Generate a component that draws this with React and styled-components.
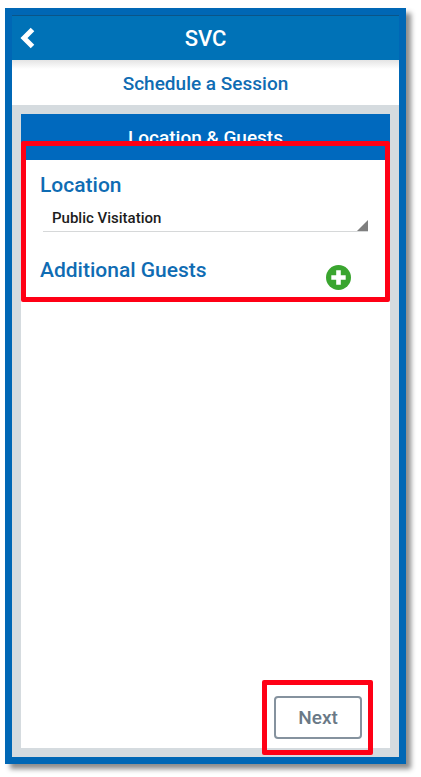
import React, { useState } from "react";
import styled, { createGlobalStyle } from "styled-components";

const GlobalStyle = createGlobalStyle`
  * {
    box-sizing: border-box;
  }
  body {
    margin: 0;
    background-color: #fff;
    font-family: Roboto, "Liberation Sans", sans-serif;
    font-weight: 500;
  }
`;

const Page = styled.div`
  display: flex;
  min-height: 100vh;
  padding: 8px 15px 13px 5px;
`;

const Frame = styled.div`
  flex: 1;
  min-width: 0;
  display: flex;
  flex-direction: column;
  border: 7px solid #0067b5;
  box-shadow: 5px 5px 5px rgba(0, 0, 0, 0.45);
`;

const TopBar = styled.header`
  display: grid;
  grid-template-columns: 32px 1fr 32px;
  align-items: center;
  height: 45px;
  border-top: 1px solid #0b5588;
  background-color: #0072b7;
  color: #fff;
`;

const BackButton = styled.button`
  display: flex;
  justify-content: center;
  padding: 0;
  border: none;
  background: none;
  color: inherit;
  cursor: pointer;
`;

const AppTitle = styled.h1`
  margin: 0;
  padding-top: 2px;
  font-size: 22px;
  font-weight: 500;
  line-height: 28px;
  text-align: center;
`;

const SubHeader = styled.h2`
  margin: 0;
  padding-top: 2px;
  background: linear-gradient(#e4e4e4, #fff 9px);
  color: #0f6cb3;
  font-size: 19px;
  font-weight: 500;
  line-height: 43px;
  text-align: center;
`;

const Content = styled.main`
  flex: 1;
  display: flex;
  padding: 9px;
  background-color: #d5dbdf;
`;

const Card = styled.section`
  flex: 1;
  min-width: 0;
  display: flex;
  flex-direction: column;
  background-color: #fff;
`;

const CardTitle = styled.h3`
  margin: 0;
  padding-top: 2px;
  background-color: #0069be;
  color: #fff;
  font-size: 19px;
  font-weight: 500;
  line-height: 44px;
  text-align: center;
`;

const Highlighted = styled.div`
  position: relative;
`;

const Highlight = styled.div`
  position: absolute;
  inset: ${({ $inset }) => $inset};
  border: 5px solid #ff0015;
  border-radius: 2px;
  pointer-events: none;
`;

const Form = styled.form`
  flex: 1;
  display: flex;
  flex-direction: column;
  justify-content: space-between;
`;

const Fields = styled(Highlighted)`
  padding: 12px 22px 12px 19px;
`;

const FieldLabel = styled.label`
  display: block;
  color: #0f6cb3;
  font-size: 21px;
  line-height: 26px;
`;

const SelectWrapper = styled.div`
  display: flex;
  align-items: flex-end;
  height: 34px;
  margin-left: 3px;
  border-bottom: 1px solid #d6d8d9;
`;

const Select = styled.select`
  flex: 1;
  min-width: 0;
  height: 26px;
  padding: 0 9px;
  border: none;
  background: none;
  appearance: none;
  color: #1c1c1c;
  font-family: inherit;
  font-size: 15px;
  font-weight: 500;
`;

const Corner = styled.span`
  width: 11px;
  height: 11px;
  background-color: #7f7f7f;
  clip-path: polygon(100% 0, 100% 100%, 0 100%);
  pointer-events: none;
`;

const GuestsRow = styled.div`
  display: flex;
  justify-content: space-between;
  align-items: flex-start;
  padding: 25px 17px 0 0;
`;

const AddButton = styled.button`
  display: flex;
  margin-top: 8px;
  padding: 0;
  border: none;
  background: none;
  cursor: pointer;
`;

const Actions = styled.div`
  display: flex;
  justify-content: flex-end;
  padding: 0 28px 9px;
`;

const NextButton = styled.button`
  width: 88px;
  height: 43px;
  padding: 0;
  border: 2px solid #85929e;
  border-radius: 4px;
  background-color: #fff;
  color: #6a7986;
  font-family: inherit;
  font-size: 19px;
  font-weight: 500;
  cursor: pointer;
`;

const App = () => {
  const [location, setLocation] = useState("public");

  return (
    <Page>
      <GlobalStyle />
      <Frame>
        <TopBar>
          <BackButton type="button" aria-label="Back">
            <svg width="16" height="22" viewBox="0 0 16 22">
              <path
                d="M12.5 2.5L4 11l8.5 8.5"
                fill="none"
                stroke="currentColor"
                strokeWidth="5"
              />
            </svg>
          </BackButton>
          <AppTitle>SVC</AppTitle>
        </TopBar>
        <SubHeader>Schedule a Session</SubHeader>
        <Content>
          <Card>
            <CardTitle>Location &amp; Guests</CardTitle>
            <Form onSubmit={(e) => e.preventDefault()}>
              <Fields>
                <FieldLabel htmlFor="location">Location</FieldLabel>
                <SelectWrapper>
                  <Select
                    id="location"
                    value={location}
                    onChange={(e) => setLocation(e.target.value)}
                  >
                    <option value="public">Public Visitation</option>
                  </Select>
                  <Corner />
                </SelectWrapper>
                <GuestsRow>
                  <FieldLabel htmlFor="add-guest">Additional Guests</FieldLabel>
                  <AddButton id="add-guest" type="button">
                    <svg width="25" height="25" viewBox="0 0 25 25">
                      <circle cx="12.5" cy="12.5" r="12.5" fill="#3aa52f" />
                      <path
                        d="M12.5 5.3v14.4M5.3 12.5h14.4"
                        stroke="#fff"
                        strokeWidth="4.6"
                      />
                    </svg>
                  </AddButton>
                </GuestsRow>
                <Highlight $inset="-19px 0 0" />
              </Fields>
              <Actions>
                <Highlighted>
                  <NextButton type="submit">Next</NextButton>
                  <Highlight $inset="-16px -11px -16px -12px" />
                </Highlighted>
              </Actions>
            </Form>
          </Card>
        </Content>
      </Frame>
    </Page>
  );
};

export default App;
